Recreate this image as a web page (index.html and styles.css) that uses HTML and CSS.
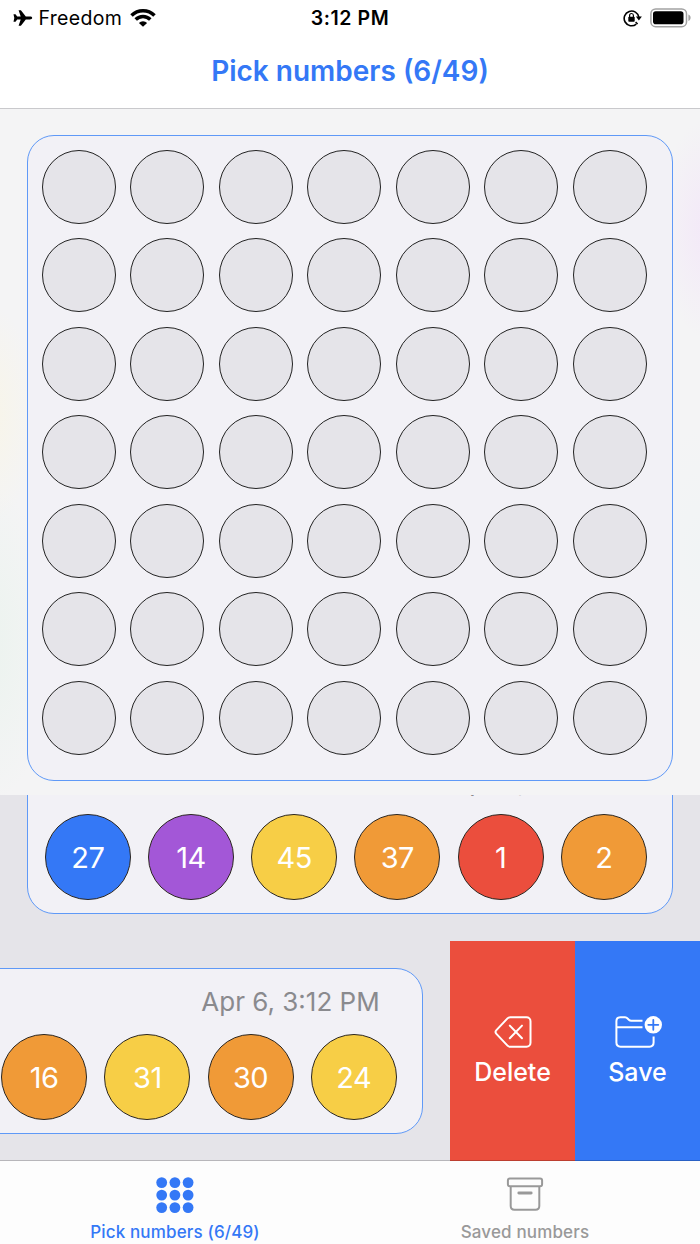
FILE: index.html
```html
<!DOCTYPE html>
<html lang="en">
<head>
<meta charset="utf-8">
<title>Pick numbers</title>
<link rel="stylesheet" href="styles.css">
</head>
<body>
<div class="app">
  <div class="status">
    <div class="status-side">
      <svg class="plane" width="20" height="18" viewBox="0 0 20 18"><path d="M19.200 9c0 .9-1 1.400-2.400 1.400h-4l-4.900 6.300H5.600l2.100-6.300H4.200L2.500 12.800H.5L1.300 9 .5 5.200h2L4.200 7.600h3.500L5.600 1.300h2.300l4.900 6.300h4c1.400 0 2.400.5 2.400 1.400z"/></svg>
      <span class="carrier">Freedom</span>
      <svg class="wifi" width="26" height="19" viewBox="0 0 26 19"><g fill="none" stroke="#000" stroke-width="3.500"><path d="M1.500 7.400a16.300 16.300 0 0 1 23 0"/><path d="M5.700 11.600a10.300 10.300 0 0 1 14.600 0"/></g><path d="M8.900 14.900a5.800 5.800 0 0 1 8.200 0L13 18.800z"/></svg>
    </div>
    <div class="clock">3:12 PM</div>
    <div class="status-side status-right">
      <svg width="20" height="18" viewBox="0 0 20 18"><path d="M13.300 15.100A7.400 7.400 0 1 1 15.900 8.300" fill="none" stroke="#000" stroke-width="1.600"/><path d="M12.600 13l2 2" stroke="#000" stroke-width="1.500"/><path d="M12.900 7.600h6l-3 3.900z"/><rect x="5.300" y="7.700" width="6.400" height="5" rx=".7"/><path d="M6.600 8V6.400a1.900 1.900 0 0 1 3.800 0V8" fill="none" stroke="#000" stroke-width="1.200"/></svg>
      <svg width="42" height="20" viewBox="0 0 42 20"><rect x=".9" y=".9" width="35.600" height="17.800" rx="4.800" fill="none" stroke="#a2a2a2" stroke-width="1.500"/><rect x="3" y="3.200" width="30.500" height="13" rx="2.800"/><path d="M38.400 6.600c1.300.4 2.200 1.600 2.200 3.200s-.9 2.800-2.200 3.200z" fill="#a2a2a2"/></svg>
    </div>
  </div>
  <h1 class="title"><span>Pick numbers (6/49)</span></h1>
  <section class="picker">
    <div class="board">
      <i></i><i></i><i></i><i></i><i></i><i></i><i></i>
      <i></i><i></i><i></i><i></i><i></i><i></i><i></i>
      <i></i><i></i><i></i><i></i><i></i><i></i><i></i>
      <i></i><i></i><i></i><i></i><i></i><i></i><i></i>
      <i></i><i></i><i></i><i></i><i></i><i></i><i></i>
      <i></i><i></i><i></i><i></i><i></i><i></i><i></i>
      <i></i><i></i><i></i><i></i><i></i><i></i><i></i>
    </div>
  </section>
  <section class="list">
    <div class="row">
      <div class="slot">
        <div class="card">
          <div class="date">Apr 6, 3:12 PM</div>
          <div class="balls">
            <span class="ball blue">27</span><span class="ball purple">14</span><span class="ball yellow">45</span><span class="ball orange">37</span><span class="ball red">1</span><span class="ball orange">2</span>
          </div>
        </div>
      </div>
    </div>
    <div class="row">
      <div class="slot">
        <div class="card">
          <div class="date">Apr 6, 3:12 PM</div>
          <div class="balls">
            <span class="ball orange">16</span><span class="ball yellow">31</span><span class="ball orange">30</span><span class="ball yellow">24</span>
          </div>
        </div>
      </div>
      <div class="action red">
        <svg width="40" height="36" viewBox="0 0 40 36" fill="none" stroke="#fff" stroke-width="2" stroke-linecap="round" stroke-linejoin="round"><path d="M17.300 3.200H33.500a4 4 0 0 1 4 4V28.800a4 4 0 0 1-4 4H17.300a4 4 0 0 1-2.800-1.200L3.400 19.900a2.800 2.800 0 0 1 0-3.800L14.500 4.400a4 4 0 0 1 2.800-1.200z"/><path d="M16.800 11.600L29 24.300M29 11.600L16.800 24.300"/></svg>
        <span class="delete">Delete</span>
      </div>
      <div class="action blue">
        <svg width="48" height="36" viewBox="0 0 48 36" fill="none" stroke="#fff" stroke-width="2" stroke-linejoin="round"><path d="M28.500 6.800H17.300c-1 0-1.700-.3-2.500-1.100l-1.200-1.200c-.8-.9-1.500-1.200-2.600-1.200H6.300c-2.500 0-3.900 1.400-3.900 3.900V28.600c0 2.700 1.500 4.100 4.200 4.100H35.500c2.700 0 4.100-1.400 4.100-4.100V22.500M2.400 13.200H28.500"/><circle cx="39.300" cy="10.800" r="8.700" fill="#fff" stroke="none"/><path d="M34.300 10.800h10M39.300 5.800v10" stroke="#3478f6" stroke-width="1.800" stroke-linecap="round"/></svg>
        <span class="save">Save</span>
      </div>
    </div>
  </section>
  <nav class="tabs">
    <div class="tab active">
      <svg width="40" height="38" viewBox="0 0 40 38" fill="#3478f6"><g id="dots"><circle cx="6.700" cy="6.600" r="5.400"/><circle cx="19.900" cy="6.600" r="5.400"/><circle cx="33.100" cy="6.600" r="5.400"/></g><use href="#dots" y="12.500"/><use href="#dots" y="25"/></svg>
      <span>Pick numbers (6/49)</span>
    </div>
    <div class="tab">
      <svg width="40" height="38" viewBox="0 0 40 38" fill="none" stroke="#999" stroke-width="2"><rect x="2.900" y="2.400" width="34.200" height="7.800" rx="2"/><path d="M5.700 10.200V30c0 2.600 1.200 3.800 3.800 3.800h21c2.600 0 3.800-1.200 3.800-3.800V10.200"/><path d="M13.800 17h12.400" stroke-width="2.800" stroke-linecap="round"/></svg>
      <span class="saved">Saved numbers</span>
    </div>
  </nav>
</div>
</body>
</html>
```
FILE: styles.css
```css
* { box-sizing: border-box; }

body {
  margin: 0;
  font-family: Inter, "Liberation Sans", sans-serif;
  color: #000;
  background: #fff;
}

.app {
  width: 700px;
  height: 1244px;
  display: flex;
  flex-direction: column;
  overflow: hidden;
}

svg { display: block; flex: none; }

.status {
  flex: none;
  height: 36px;
  padding: 0 8.500px 0 12.500px;
  display: grid;
  grid-template-columns: 1fr auto 1fr;
  align-items: center;
  font-size: 19.5px;
}

.status-side { display: flex; align-items: center; }
.status-right { justify-content: flex-end; gap: 7px; }
.carrier { margin-left: 6px; letter-spacing: 0.3px; }
.wifi { margin: -2px 0 0 8px; }
.clock { font-weight: 600; letter-spacing: 0.6px; margin-right: 4px; }

.title {
  flex: none;
  height: 73px;
  margin: 0;
  border-bottom: 1px solid #c9c9cc;
  text-align: center;
  font-size: 28px;
  line-height: 70px;
  font-weight: 600;
  color: #3478f6;
}

.picker {
  flex: none;
  height: 686px;
  padding: 26px 27px 0;
  background:
    radial-gradient(50px 110px at 708px 120px, #f3e8f8, transparent),
    radial-gradient(50px 110px at -12px 305px, #f8f5e8, transparent),
    radial-gradient(70px 160px at -15px 535px, #ebf3ee, transparent),
    radial-gradient(60px 120px at 700px 440px, #f1f4f5, transparent),
    #f4f4f5;
}

.board {
  width: 646px;
  height: 646px;
  padding: 14px;
  display: grid;
  grid-template-columns: repeat(7, 74px);
  grid-auto-rows: 74px;
  gap: 14.450px;
  border: 1px solid #5f99f7;
  border-radius: 27px;
  background: #f2f1f6;
}

.board i {
  border: 1px solid #222;
  border-radius: 50%;
  background: #e5e4e9;
}

.list {
  flex: none;
  height: 366px;
  display: flex;
  flex-direction: column;
  justify-content: flex-end;
  overflow: hidden;
  background: #e5e4e9;
}

.row { flex: none; height: 220px; display: flex; }

.slot {
  flex: 1;
  min-width: 0;
  padding: 27px 27px 0 0;
  display: flex;
  justify-content: flex-end;
  overflow: hidden;
}

.card {
  flex: none;
  width: 646px;
  height: 166px;
  padding: 15px 25.300px 0 16px;
  border: 1px solid #5f99f7;
  border-radius: 27px;
  background: #f2f1f6;
}

.date {
  height: 36px;
  padding-right: 17px;
  text-align: right;
  font-size: 26px;
  line-height: 36px;
  color: #8a8a8e;
}

.balls {
  margin-top: 14px;
  display: flex;
  justify-content: flex-end;
  gap: 17.200px;
}

.ball {
  width: 86px;
  height: 86px;
  border: 1px solid #2b2620;
  border-radius: 50%;
  color: #fff;
  text-align: center;
  font-size: 29px;
  line-height: 85px;
  letter-spacing: -0.6px;
}

.blue { background: #3478f6; }
.purple { background: #a357d7; }
.yellow { background: #f7ce46; }
.orange { background: #f09a37; }
.red { background: #eb4e3d; }

.action {
  width: 125px;
  padding-top: 73px;
  display: flex;
  flex-direction: column;
  align-items: center;
  color: #fff;
  font-size: 25px;
  font-weight: 500;
  line-height: 45px;
}

.tabs {
  flex: 1;
  margin-top: -1px;
  position: relative;
  display: flex;
  border-top: 1px solid rgba(0, 0, 0, 0.2);
  background: #fdfdfd;
  background-clip: padding-box;
}

.tab {
  flex: 1;
  padding-top: 15px;
  display: flex;
  flex-direction: column;
  align-items: center;
  color: #999;
  font-size: 17px;
  line-height: 36px;
  font-weight: 500;
  letter-spacing: 0.15px;
}

.tab.active { color: #3478f6; }
```
